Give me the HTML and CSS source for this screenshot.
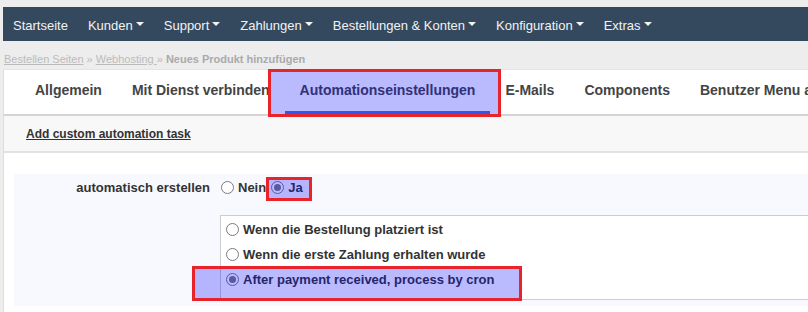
FILE: index.html
```html
<!DOCTYPE html>
<html lang="de">
<head>
    <meta charset="UTF-8">
    <title>Neues Produkt hinzufügen</title>
    <link rel="stylesheet" href="styles.css">
</head>
<body>
    <div class="page">
        <nav class="topnav">
            <a href="#">Startseite</a>
            <a href="#" class="dd">Kunden</a>
            <a href="#" class="dd">Support</a>
            <a href="#" class="dd">Zahlungen</a>
            <a href="#" class="dd">Bestellungen &amp; Konten</a>
            <a href="#" class="dd">Konfiguration</a>
            <a href="#" class="dd">Extras</a>
        </nav>

        <div class="breadcrumb">
            <a href="#">Bestellen Seiten</a> &raquo; <a href="#">Webhosting </a> &raquo; <strong>Neues Produkt hinzufügen</strong>
        </div>

        <div class="panel">
            <ul class="tabs">
                <li>Allgemein</li>
                <li>Mit Dienst verbinden</li>
                <li class="active">Automationseinstellungen</li>
                <li>E-Mails</li>
                <li>Components</li>
                <li>Benutzer Menu anpassen</li>
            </ul>

            <div class="toolbar">
                <a href="#">Add custom automation task</a>
            </div>

            <div class="form-area">
                <div class="form-row">
                    <div class="field-label">automatisch erstellen</div>
                    <div class="field-input">
                        <label><span class="radio"></span>Nein</label>
                        <label><span class="radio checked"></span>Ja</label>
                    </div>
                </div>
                <div class="options">
                    <label><span class="radio"></span>Wenn die Bestellung platziert ist</label>
                    <label><span class="radio"></span>Wenn die erste Zahlung erhalten wurde</label>
                    <label><span class="radio checked"></span>After payment received, process by cron</label>
                </div>
            </div>
        </div>
    </div>

    <!-- annotation highlights -->
    <div class="mark mark-tab"></div>
    <div class="mark mark-ja"></div>
    <div class="mark mark-cron"></div>
</body>
</html>
```

FILE: styles.css
```css
* { margin: 0; padding: 0; box-sizing: border-box; }
html, body { background: #ededed; font-family: "Liberation Sans", Arial, sans-serif; color: #333; overflow: hidden; }
body { width: 808px; height: 312px; position: relative; }
.page { padding: 7px 0 0 3px; }

.topnav { display: flex; height: 34px; background: #34495e; }
.topnav a { display: flex; align-items: center; padding: 2px 10px 0; color: #f2f2f2; text-decoration: none; font-size: 13px; white-space: nowrap; }
.topnav a.dd::after { content: ""; margin-left: 3px; margin-top: -3px; border-left: 4px solid transparent; border-right: 4px solid transparent; border-top: 4px solid #f2f2f2; }

.breadcrumb { height: 28px; padding: 12px 0 0 1px; font-size: 11px; color: #bbb; white-space: nowrap; }
.breadcrumb a { color: #bbb; }
.breadcrumb strong { color: #aaa; }

.panel { background: #fff; border-left: 1px solid #ddd; border-top: 1px solid #e4e4e4; height: 250px; }

.tabs { display: flex; list-style: none; padding-left: 16px; border-bottom: 2px solid #d4d4d4; height: 46px; white-space: nowrap; overflow: hidden; }
.tabs li { padding: 0 15px; line-height: 41px; font-size: 14px; font-weight: bold; color: #444; border-bottom: 3px solid transparent; }
.tabs li.active { border-bottom-color: #3d7be4; }

.toolbar { background: #f8f8f8; border-bottom: 2px solid #e2e2e2; height: 37px; padding: 8px 0 0 22px; }
.toolbar a { font-size: 12px; font-weight: bold; color: #333; }

.form-area { margin: 21px 0 0 10px; background: #f8f9ff; padding: 1px 0 6px 0; }
.form-row { display: flex; align-items: flex-start; height: 40px; }
.field-label { width: 196px; text-align: right; font-size: 13px; font-weight: bold; line-height: 25px; }
.field-input { display: flex; align-items: flex-start; gap: 5px; padding-left: 11px; }
.field-input label { height: 25px; }

label { display: flex; align-items: center; font-size: 13px; font-weight: bold; color: #333; }
.radio { width: 13px; height: 13px; border: 1.5px solid #7a7a80; border-radius: 50%; background: #fff; margin-right: 4px; display: inline-flex; align-items: center; justify-content: center; }
.radio.checked::after { content: ""; width: 7px; height: 7px; border-radius: 50%; background: #7a7a80; }

.options { margin-left: 206px; border: 1px solid #ccc; border-right: none; background: #fff; padding: 1px 0 7px 5px; }
.options label { height: 25px; }

.mark { position: absolute; border: 3px solid #e8232a; background: rgba(0, 0, 255, 0.27); }
.mark-tab { left: 268px; top: 69px; width: 233px; height: 48px; }
.mark-ja { left: 266px; top: 177px; width: 46px; height: 24px; }
.mark-cron { left: 192px; top: 266px; width: 330px; height: 35px; }
```
